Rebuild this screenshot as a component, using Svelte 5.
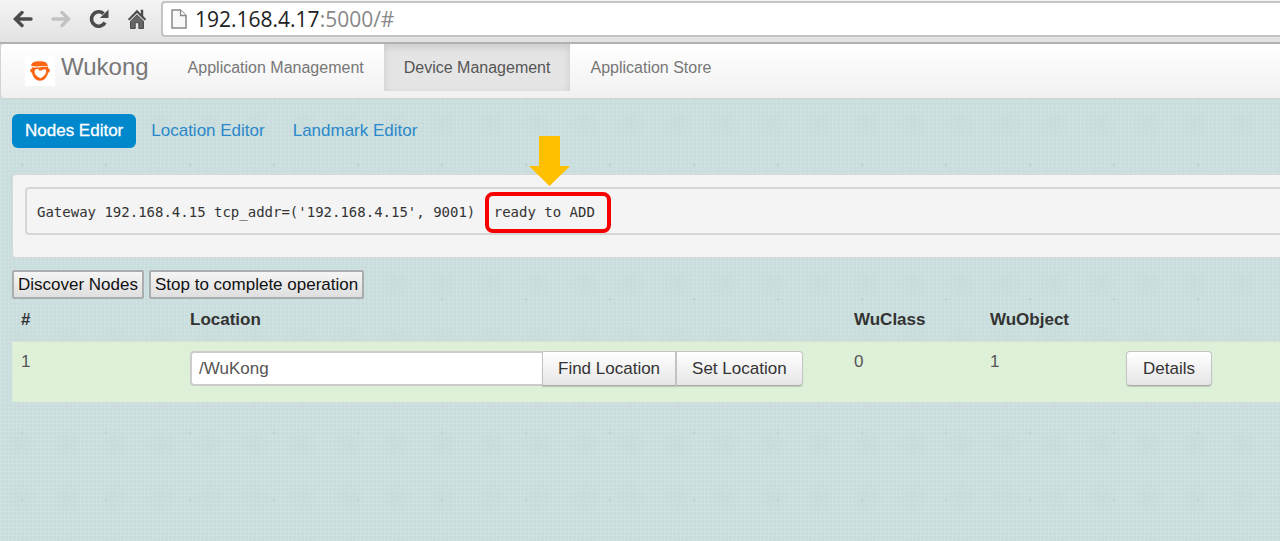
<script>
  let sections = ['Application Management', 'Device Management', 'Application Store'];
  let editors = ['Nodes Editor', 'Location Editor', 'Landmark Editor'];
  let nodes = $state([{ id: 1, location: '/WuKong', classes: 0, objects: 1 }]);
</script>

<header class="toolbar">
  <button class="tool" aria-label="Back">
    <svg width="20" height="20" viewBox="0 0 20 20" fill="none" stroke="#4b4b4b" stroke-width="3.4" stroke-linecap="round"><path d="M3 10H18M9 3.500 2.400 10 9 16.500" /></svg>
  </button>
  <button class="tool" aria-label="Forward">
    <svg width="20" height="20" viewBox="0 0 20 20" fill="none" stroke="#c2c2c2" stroke-width="3.4" stroke-linecap="round"><path d="M17 10H2M11 3.500 17.600 10 11 16.500" /></svg>
  </button>
  <button class="tool" aria-label="Reload">
    <svg width="20" height="20" viewBox="0 0 20 20"><path d="M14.500 4.600A7.200 7.200 0 1 0 16 13.500" fill="none" stroke="#4b4b4b" stroke-width="3.600" /><path d="M19.500 0.500V9H11z" fill="#4b4b4b" /></svg>
  </button>
  <button class="tool" aria-label="Home">
    <svg width="20" height="20" viewBox="0 0 20 20" fill="#4b4b4b"><path d="M10 0.800 0.800 10.200l1.600 1.400L10 4l7.600 7.600 1.600-1.400-3-3.100V0.800h-2.400v4z" /><path d="M10 5.800 3.500 12.200V19.500h4.700v-5.800h3.600v5.800h4.700v-7.300z" fill="#666" stroke="#4b4b4b" /></svg>
  </button>
  <div class="address">
    <svg width="16" height="20" viewBox="0 0 16 20"><path d="M1 1h8.500L15 6.500V19H1z" fill="#f8f8f8" stroke="#888" stroke-width="1.500" /><path d="M9.500 1v5.500H15" fill="#fff" stroke="#888" stroke-width="1.300" /></svg>
    <span class="url">192.168.4.17<span class="rest">:5000/#</span></span>
  </div>
</header>

<nav class="navbar">
  <a class="brand" href="#home">
    <svg width="30" height="30" viewBox="0 0 30 30">
      <rect width="30" height="30" fill="#fff" />
      <path d="M6.500 8C8 5.400 11 5 15 5.200c4 0 7 .8 8 4.500-5 .2-10 1.300-16.800.2z" fill="#fb6514" />
      <path d="M7 11.200c6 1 11-.6 16-.8l.3 2.200c1.500.2 1.800 1 1.400 2.400-.3 1.200-.8 1.700-1.700 1.800-.8 4.700-4 8-8 8s-7.200-3.300-8-8c-1-.2-1.500-.8-1.700-2-.2-1.200.2-2 1.500-2z" fill="#fb6514" />
      <path d="M10 14c1.300-1.600 3.500-1.200 4.600.8 2.600.2 4-2.200 6-1.300 1.800 3-1 6.800-5.300 8.700C11 20 8.500 17 10 14z" fill="#fff" />
    </svg>
    <span>Wukong</span>
  </a>
  {#each sections as section, i}
    <a class="section" class:active={i === 1} href="#section-{i}">{section}</a>
  {/each}
</nav>

<main>
  <div class="pills">
    {#each editors as editor, i}
      <a class:active={i === 0} href="#editor-{i}">{editor}</a>
    {/each}
  </div>

  <section class="well">
    <pre>Gateway 192.168.4.15 tcp_addr=('192.168.4.15', 9001) <span class="callout">ready to ADD<svg class="arrow" width="42" height="50" viewBox="0 0 42 50"><path d="M11 0h21v30h10L21.500 50 1 30h10z" fill="#ffc000" /></svg></span></pre>
  </section>

  <div class="actions">
    <button>Discover Nodes</button>
    <button>Stop to complete operation</button>
  </div>

  <table>
    <colgroup>
      <col class="number" /><col /><col class="count" /><col class="count" /><col class="detail" />
    </colgroup>
    <thead>
      <tr><th>#</th><th>Location</th><th>WuClass</th><th>WuObject</th><th></th></tr>
    </thead>
    <tbody>
      {#each nodes as node}
        <tr>
          <td>{node.id}</td>
          <td>
            <div class="group">
              <input type="text" aria-label="Location" bind:value={node.location} />
              <button class="btn">Find Location</button>
              <button class="btn">Set Location</button>
            </div>
          </td>
          <td>{node.classes}</td>
          <td>{node.objects}</td>
          <td><button class="btn single">Details</button></td>
        </tr>
      {/each}
    </tbody>
  </table>
</main>

<style>
  :global(body) {
    margin: 0;
    background:
      radial-gradient(circle at 22px 31px, #c2d6d6 0 1px, transparent 2px) 0 0 / 84px 67px,
      radial-gradient(circle at 20px 20px, #c5d9d966, transparent 16px) 0 0 / 47px 53px,
      repeating-linear-gradient(0deg, #d4e6e480 0 1px, transparent 1px 4px),
      repeating-linear-gradient(90deg, #d4e6e480 0 1px, transparent 1px 4px),
      #c9dddc;
    color: #333;
    font: 17px/22px "Liberation Sans", Arial, sans-serif;
  }
  * { box-sizing: border-box; }
  a { text-decoration: none; }
  button, input { font: inherit; }
  svg { display: block; flex: none; }

  .toolbar {
    display: flex;
    align-items: flex-start;
    gap: 18px;
    height: 44px;
    padding: 1px 0 0 13px;
    border-bottom: 2px solid #b0b0b0;
    background: linear-gradient(#f4f4f4, #e2e2e2);
  }
  .tool {
    padding: 0;
    margin-top: 8px;
    border: 0;
    background: none;
  }
  .address {
    display: flex;
    flex: 1;
    align-items: center;
    gap: 8px;
    height: 36px;
    margin-left: -4px;
    padding-left: 8px;
    border: 2px solid #c4c4c4;
    border-right: 0;
    border-radius: 4px 0 0 4px;
    background: #fff;
  }
  .url {
    color: #222;
    font: 21px/28px "Open Sans", "Noto Sans", sans-serif;
  }
  .rest { color: #888; }

  .navbar {
    display: flex;
    align-items: flex-start;
    height: 55px;
    padding-left: 24px;
    border: 1px solid #d0d4d4;
    border-width: 0 0 1px 1px;
    border-radius: 4px 0 0 4px;
    background: linear-gradient(#fff, #f1f1f1);
    font-size: 16px;
  }
  .brand {
    display: flex;
    gap: 6px;
    margin-right: 19px;
    padding-top: 12px;
    color: #777;
    font-size: 24px;
  }
  .section {
    padding: 13px 20px 12px;
    color: #777;
  }
  .section.active {
    background: #e5e5e5;
    box-shadow: inset 0 3px 9px #0000001f;
    color: #555;
  }

  main { padding: 15px 0 0 12px; }
  .pills {
    display: flex;
    gap: 2px;
    margin-bottom: 26px;
  }
  .pills a {
    padding: 6px 13px;
    border-radius: 6px;
    color: #2b88cb;
  }
  .pills a.active {
    background: #0088cc;
    color: #fff;
    -webkit-text-stroke: 0.3px #fff;
  }

  .well {
    padding: 12px 0 22px 12px;
    border: 1px solid #d6d8d8;
    border-right: 0;
    border-radius: 4px 0 0 4px;
    background: #f4f4f4;
  }
  pre {
    margin: 0;
    padding: 12px 10px 10px;
    border: 2px solid #d6d6d6;
    border-right: 0;
    border-radius: 4px 0 0 4px;
    font: 14px/22px "DejaVu Sans Mono", monospace;
  }
  .callout {
    position: relative;
    margin-left: 10px;
  }
  .callout::after {
    content: "";
    position: absolute;
    inset: -12px -16px -13px -9px;
    border: 4px solid #f80000;
    border-radius: 8px;
  }
  .arrow {
    position: absolute;
    bottom: 34px;
    left: 34px;
  }

  .actions {
    display: flex;
    gap: 5px;
    margin-top: 12px;
  }
  .actions button {
    height: 29px;
    padding: 0 4px;
    border: 2px solid #a9adad;
    border-radius: 2px;
    background: linear-gradient(#f5f5f5, #dfdfdf);
    color: #111;
    line-height: 22px;
  }

  table {
    width: 100%;
    border-collapse: collapse;
    table-layout: fixed;
  }
  .number { width: 169px; }
  .count { width: 136px; }
  .detail { width: 163px; }
  th {
    padding: 10px 9px;
    font-size: 17px;
    text-align: left;
  }
  td {
    height: 60px;
    padding: 9px;
    border-top: 1px solid #d8ddd5;
    background: #dff0d8;
    color: #555;
    vertical-align: top;
  }
  .group { display: flex; }
  input {
    width: 352px;
    height: 35px;
    padding: 0 7px;
    border: 2px solid #ccc;
    border-right: 0;
    border-radius: 4px 0 0 4px;
    background: #fff;
    color: #555;
  }
  .btn {
    height: 35px;
    padding: 0 16px;
    border: 1px solid #c4c4c4;
    border-bottom-color: #aaa;
    background: linear-gradient(#fff, #e6e6e6);
    box-shadow: 0 1px 1px #00000026;
    color: #333;
  }
  .group .btn { padding: 0 15px; }
  .group .btn:last-child { border-radius: 0 4px 4px 0; }
  .btn.single { border-radius: 4px; }
</style>
